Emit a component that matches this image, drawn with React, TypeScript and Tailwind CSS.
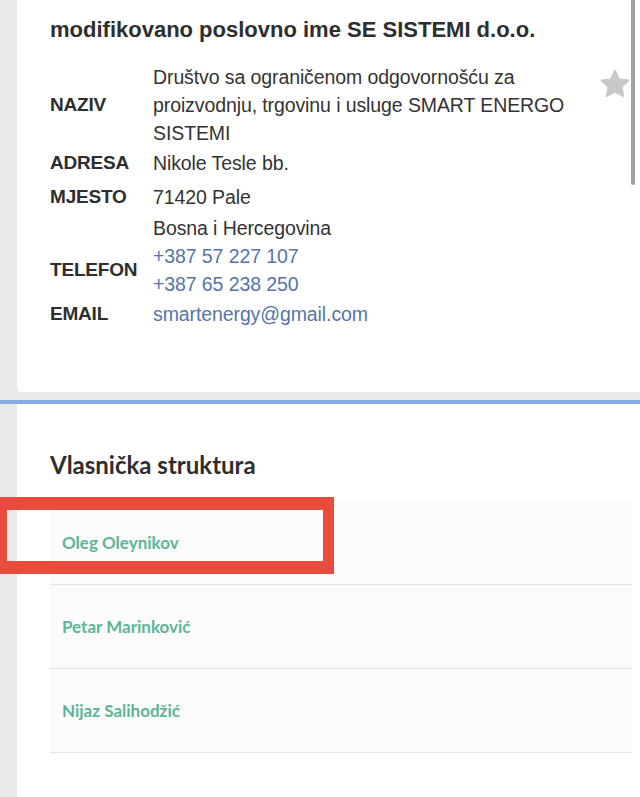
const rows = [
  { label: 'NAZIV', lines: ['Društvo sa ograničenom odgovornošću za', 'proizvodnju, trgovinu i usluge SMART ENERGO', 'SISTEMI'], gap: 'mt-0' },
  { label: 'ADRESA', lines: ['Nikole Tesle bb.'], gap: 'mt-[2px]' },
  { label: 'MJESTO', lines: ['71420 Pale'], gap: 'mt-[6px]' },
  { label: '', lines: ['Bosna i Hercegovina'], gap: 'mt-[3px]' },
  { label: 'TELEFON', lines: ['+387 57 227 107', '+387 65 238 250'], gap: 'mt-0', link: true },
  { label: 'EMAIL', lines: ['smartenergy@gmail.com'], gap: 'mt-[2px]', link: true },
];

const owners = ['Oleg Oleynikov', 'Petar Marinković', 'Nijaz Salihodžić'];

function Star() {
  return (
    <svg viewBox="0 0 24 24" className="w-[32px] h-[32px]">
      <path
        d="M12 1.8l3.1 6.6 7.1.9-5.2 4.9 1.4 7.1L12 17.8l-6.4 3.5 1.4-7.1-5.2-4.9 7.1-.9z"
        fill="#c8c8c8"
        stroke="#c8c8c8"
        strokeWidth="1.2"
        strokeLinejoin="round"
      />
    </svg>
  );
}

export default function App() {
  return (
    <div className="relative w-[640px] h-[797px] overflow-hidden bg-[#e9e9e9]">
      {/* company card */}
      <div className="relative ml-[17px] h-[392px] bg-white rounded-bl-[4px] pl-[33px] pt-[15px] font-['Liberation_Sans',Arial,sans-serif] text-[#2e2e2e]">
        <h1 className="text-[22px] leading-[30px] font-bold">modifikovano poslovno ime SE SISTEMI d.o.o.</h1>

        <div className="mt-[18px] flex flex-col">
          {rows.map((r, i) => (
            <div key={i} className={`flex items-center ${r.gap}`}>
              <div className="w-[103px] shrink-0 text-[19px] font-bold leading-[28px] tracking-[-0.2px]">{r.label}</div>
              <div className="flex flex-col">
                {r.lines.map((l) => (
                  <span
                    key={l}
                    className={`text-[19.5px] leading-[28px] tracking-[-0.1px] whitespace-nowrap ${r.link ? 'text-[#5674ab]' : 'text-[#333333]'}`}
                  >
                    {l}
                  </span>
                ))}
              </div>
            </div>
          ))}
        </div>

        <div className="absolute left-[582px] top-[68px]">
          <Star />
        </div>
        <div className="absolute left-[614px] top-0 w-[4px] h-[185px] rounded-b-full bg-[#a2a2a2]" />
      </div>

      <div className="h-[8px]" />
      <div className="h-[4px] bg-[#87aae2]" />

      {/* ownership card */}
      <div className="ml-[17px] h-[400px] bg-white pl-[33px] pt-[45px] font-['Lato',sans-serif]">
        <h2 className="text-[24px] leading-[32px] font-bold text-[#2e2e2e]">Vlasnička struktura</h2>
        <div className="mt-[20px] w-[582px]">
          {owners.map((o) => (
            <div key={o} className="h-[84px] flex items-center pl-[12px] bg-[#fbfbfb] border-b border-[#e6e6e6]">
              <span className="text-[17px] font-bold text-[#5cb599]">{o}</span>
            </div>
          ))}
        </div>
      </div>

      {/* annotation */}
      <div className="absolute left-0 top-[497px] w-[334px] h-[77px] border-[#e84c3c] border-l-[7px] border-r-[11px] border-y-[13px]" />
    </div>
  );
}
